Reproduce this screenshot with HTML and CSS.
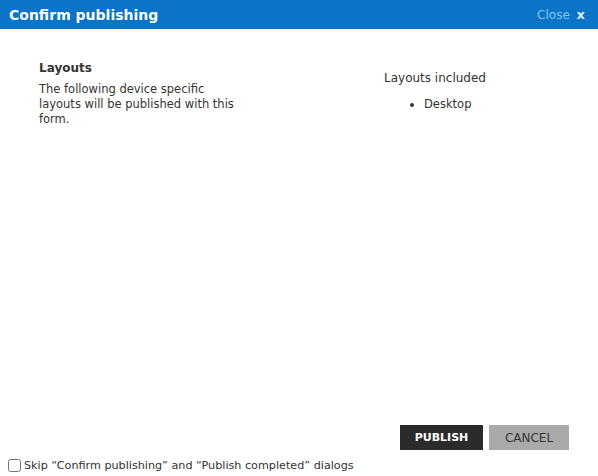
FILE: index.html
```html
<!DOCTYPE html>
<html lang="en">

<head>
    <meta charset="UTF-8">
    <title>Confirm publishing</title>
    <link rel="stylesheet" href="styles.css">
</head>

<body>
    <div class="dialog">
        <div class="dialog-header">
            <h1>Confirm publishing</h1>
            <a href="#" class="close-link">Close <span class="close-x">x</span></a>
        </div>

        <div class="dialog-body">
            <div class="info-col">
                <h2>Layouts</h2>
                <p>The following device specific layouts will be published with this form.</p>
            </div>
            <div class="layouts-col">
                <p>Layouts included</p>
                <ul>
                    <li>Desktop</li>
                </ul>
            </div>
        </div>

        <div class="dialog-actions">
            <button class="btn btn-publish">PUBLISH</button>
            <button class="btn btn-cancel">CANCEL</button>
        </div>

        <label class="skip-row">
            <input type="checkbox">
            <span>Skip “Confirm publishing” and “Publish completed” dialogs</span>
        </label>
    </div>
</body>

</html>
```

FILE: styles.css
```css
* {
    margin: 0;
    padding: 0;
    box-sizing: border-box;
}

body {
    font-family: "DejaVu Sans", Verdana, sans-serif;
    font-size: 11.5px;
    color: #333;
    background-color: #fff;
}

.dialog {
    width: 598px;
    height: 476px;
    display: flex;
    flex-direction: column;
}

.dialog-header {
    background-color: #0a74c9;
    height: 29px;
    display: flex;
    justify-content: space-between;
    align-items: center;
    padding: 0 13px 0 9px;
}

.dialog-header h1 {
    color: #fff;
    font-size: 14px;
    font-weight: bold;
}

.close-link {
    color: #86c3f1;
    text-decoration: none;
    font-size: 12px;
}

.close-x {
    color: #dbeefc;
    font-weight: bold;
    font-size: 13px;
    margin-left: 3px;
}

.dialog-body {
    flex-grow: 1;
    display: flex;
    padding: 32px 0 0 39px;
}

.info-col {
    width: 210px;
}

.info-col h2 {
    font-size: 12px;
    font-weight: bold;
    color: #333;
    margin-bottom: 7px;
}

.info-col p {
    line-height: 15px;
}

.layouts-col {
    margin-left: 135px;
    padding-top: 10px;
}

.layouts-col p {
    font-size: 12px;
}

.layouts-col ul {
    margin-top: 12px;
    padding-left: 40px;
}

.dialog-actions {
    display: flex;
    justify-content: flex-end;
    gap: 6px;
    padding-right: 29px;
}

.btn {
    font-family: "DejaVu Sans", Verdana, sans-serif;
    font-size: 12px;
    height: 25px;
    border: none;
    padding: 0;
}

.btn-publish {
    background-color: #2b2b2b;
    color: #fff;
    font-weight: bold;
    font-size: 11px;
    width: 83px;
}

.btn-cancel {
    background-color: #aaa;
    color: #333;
    width: 80px;
}

.skip-row {
    display: flex;
    align-items: center;
    gap: 3px;
    height: 26px;
    padding: 4px 0 0 8px;
    font-size: 11.2px;
    color: #333;
}

.skip-row input {
    width: 13px;
    height: 13px;
    margin: 0;
}
```
